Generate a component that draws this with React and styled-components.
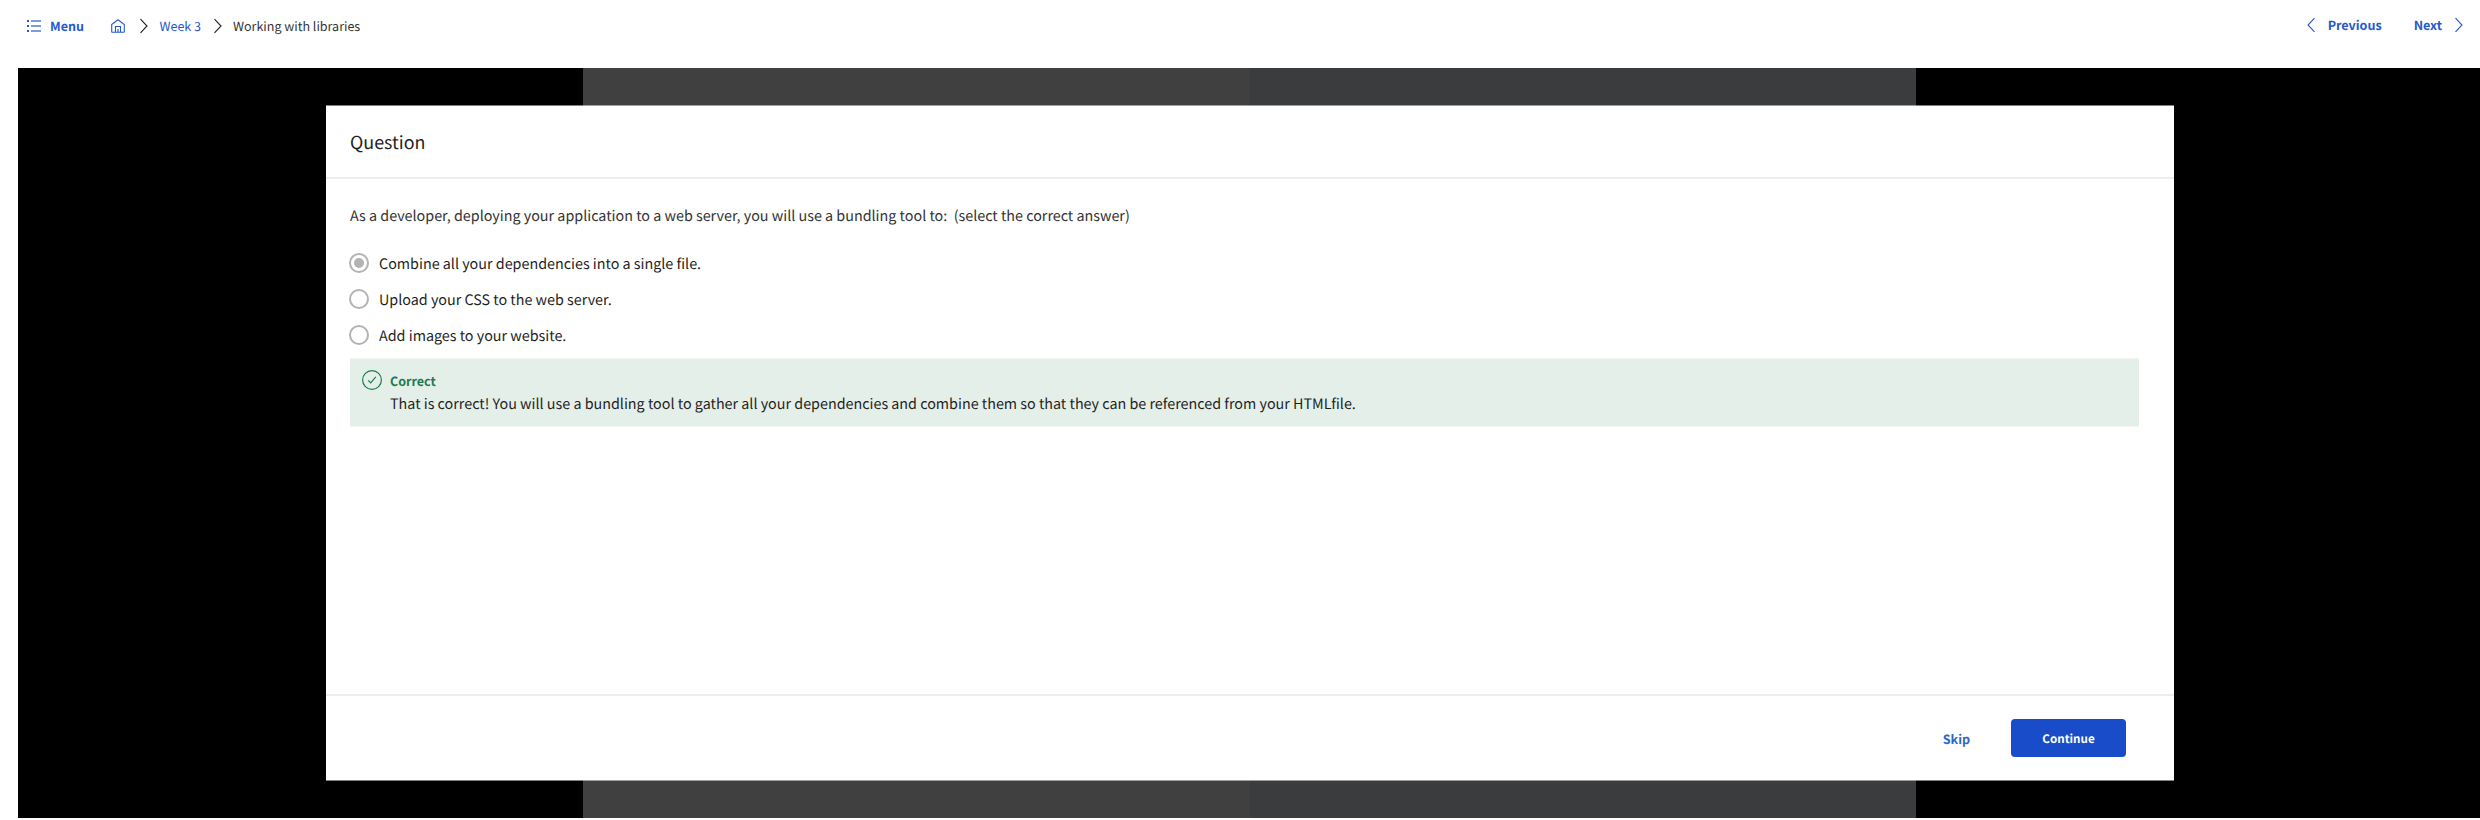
import React from 'react';
import styled, { createGlobalStyle } from 'styled-components';

const Global = createGlobalStyle`
  * { box-sizing: border-box; }
  body { margin: 0; background: #fff; font-family: "Noto Sans CJK SC", "Noto Sans", sans-serif; color: #1f1f1f; text-rendering: geometricPrecision; }
  p, h1 { margin: 0; }
`;

const Page = styled.div`
  height: 820px;
  overflow: hidden;
`;

const TopBar = styled.header`
  height: 68px;
  display: flex;
  justify-content: space-between;
  padding: 0 17px 0 26px;
`;

const Group = styled.nav`
  display: flex;
  align-items: center;
  height: ${(p) => p.$height}px;
`;

const Label = styled.span`
  display: block;
  font-size: ${(p) => p.$size || 12.53}px;
  line-height: 20px;
  font-weight: ${(p) => (p.$bold ? 700 : 400)};
  color: ${(p) => p.$color || '#2659d0'};
  margin-left: ${(p) => p.$left || 0}px;
  white-space: pre;
`;

const Icon = styled.svg`
  flex: none;
  display: block;
  overflow: visible;
  fill: none;
  stroke: ${(p) => p.$color || '#2659d0'};
  stroke-width: ${(p) => p.$weight || 1.1};
  margin-left: ${(p) => p.$left || 0}px;
`;

const Stage = styled.main`
  height: 750px;
  margin-left: 18px;
  padding: 37px 306px 37px 308px;
  background: linear-gradient(to right, #000 565px, #404040 565px, #404040 1232px, #3b3c3e 1232px, #3b3c3e 1898px, #000 1898px);
`;

const Card = styled.section`
  height: 676px;
  background: #fff;
  background-clip: padding-box;
  border: solid rgba(255, 255, 255, 0.5);
  border-width: 1px 0;
  display: flex;
  flex-direction: column;
`;

const CardHeader = styled.div`
  height: 73px;
  border-bottom: 2px solid #ededed;
  padding: 19.5px 24px 0;
`;

const Title = styled.h1`
  font-size: 17.9px;
  line-height: 32px;
  font-weight: 400;
`;

const CardBody = styled.div`
  flex: 1;
  padding: 26px 35px 0 24px;
`;

const Text = styled.p`
  font-size: 14.33px;
  line-height: 22px;
  color: ${(p) => p.$color || '#1f1f1f'};
  white-space: pre;
`;

const Options = styled.div`
  margin-top: 18px;
  margin-left: -1px;
`;

const Option = styled.label`
  display: flex;
  align-items: center;
  height: 36px;
  gap: 10px;

  ${Text} {
    padding-top: 2px;
  }
`;

const Radio = styled.span`
  width: 20px;
  height: 20px;
  border: 2px solid #b3b3b3;
  border-radius: 50%;
  display: grid;
  place-items: center;
  &::after {
    content: "";
    width: 10px;
    height: 10px;
    border-radius: 50%;
    background: ${(p) => (p.$checked ? '#b3b3b3' : 'transparent')};
  }
`;

const Feedback = styled.div`
  height: 69px;
  margin-top: 5px;
  padding: 11px 12px;
  background: #e5efe9;
  border: solid #f2f7f4;
  border-width: 1px 0;
  display: flex;
  gap: 8px;
`;

const FeedbackCopy = styled.div`
  display: grid;
  gap: 2px;
  align-content: start;
  padding-top: 1px;
`;

const CardFooter = styled.footer`
  height: 86px;
  border-top: 2px solid #ededed;
  display: flex;
  justify-content: flex-end;
  align-items: center;
  padding-right: 48px;
  gap: 41px;

  ${Label} {
    padding-top: 1px;
  }
`;

const Button = styled.button`
  width: 115px;
  height: 38px;
  border: 0;
  padding: 0;
  border-radius: 4px;
  background: #184cc8;
  font-family: inherit;
  text-rendering: inherit;
`;

const options = [
  { text: 'Combine all your dependencies into a single file.', checked: true },
  { text: 'Upload your CSS to the web server.' },
  { text: 'Add images to your website.' },
];

export default function App() {
  return (
    <Page>
      <Global />
      <TopBar>
        <Group $height={52}>
          <Icon width="15" height="12" viewBox="0 0 15 12">
            <path d="M1 1h2M1 6h2M1 11h2" strokeWidth="2" />
            <path d="M5 1h10M5 6h10M5 11h10" strokeWidth="2" stroke="#7b9ae0" />
          </Icon>
          <Label $bold $left={9}>Menu</Label>
          <Icon $left={27} width="14" height="14" viewBox="0 0 14 14">
            <path d="M.7 5.5 7 .8l6.3 4.7v7.2q0 .6-.6.6H1.3q-.6 0-.6-.6zM4.5 13V7.5h5V13M7 10v3" />
          </Icon>
          <Icon $left={15.5} $color="#222" width="8" height="14" viewBox="0 0 8 14"><path d="M.5.2 7 7 .5 13.8" /></Icon>
          <Label $left={11}>Week 3</Label>
          <Icon $left={13} $color="#222" width="8" height="14" viewBox="0 0 8 14"><path d="M.5.2 7 7 .5 13.8" /></Icon>
          <Label $left={11} $color="#333">Working with libraries</Label>
        </Group>
        <Group $height={50}>
          <Icon width="8" height="14" viewBox="0 0 8 14"><path d="M7.5.2 1 7l6.5 6.8" /></Icon>
          <Label $bold $left={13}>Previous</Label>
          <Label $bold $left={32}>Next</Label>
          <Icon $left={13} width="8" height="14" viewBox="0 0 8 14"><path d="M.5.2 7 7 .5 13.8" /></Icon>
        </Group>
      </TopBar>
      <Stage>
        <Card>
          <CardHeader><Title>Question</Title></CardHeader>
          <CardBody>
            <Text $color="#333">As a developer, deploying your application to a web server, you will use a bundling tool to:  (select the correct answer)</Text>
            <Options>
              {options.map((o) => (
                <Option key={o.text}>
                  <Radio $checked={o.checked} />
                  <Text>{o.text}</Text>
                </Option>
              ))}
            </Options>
            <Feedback>
              <Icon $color="#1d7c50" $weight={1.2} width="20" height="20" viewBox="0 0 20 20">
                <circle cx="10" cy="10" r="9.4" />
                <path d="m6.2 10.3 2.5 2.6 5.1-6" />
              </Icon>
              <FeedbackCopy>
                <Label $bold $color="#1d7c50">Correct</Label>
                <Text>That is correct! You will use a bundling tool to gather all your dependencies and combine them so that they can be referenced from your HTMLfile.</Text>
              </FeedbackCopy>
            </Feedback>
          </CardBody>
          <CardFooter>
            <Label $bold $color="#2a67c6">Skip</Label>
            <Button><Label $bold $color="#fff" $size={11.6}>Continue</Label></Button>
          </CardFooter>
        </Card>
      </Stage>
    </Page>
  );
}
